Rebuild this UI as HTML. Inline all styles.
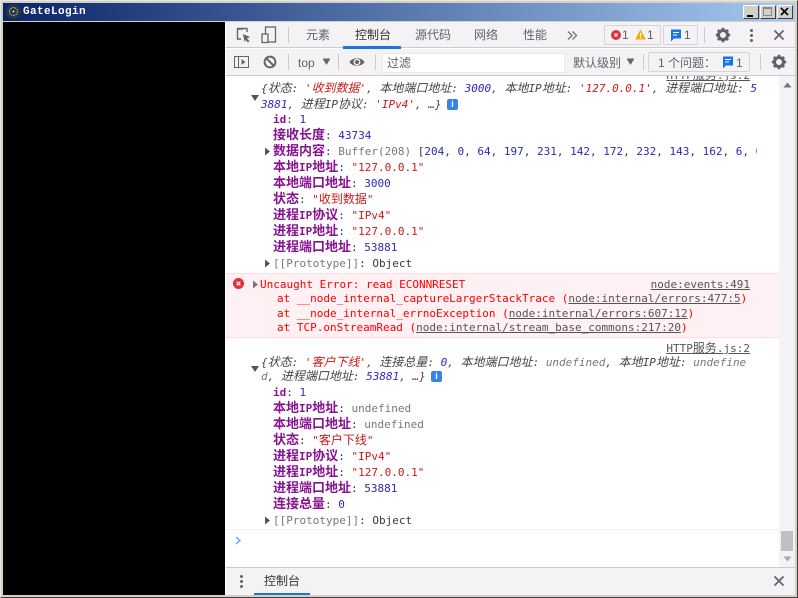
<!DOCTYPE html>
<html><head><meta charset="utf-8">
<style>
html,body{margin:0;padding:0;width:798px;height:598px;overflow:hidden;background:#d4d0c8}
*{box-sizing:border-box}
div,span.a,svg.a{position:absolute}
.ui{font-family:"Liberation Sans","Noto Sans CJK SC",sans-serif;font-size:12px;color:#5f6368;line-height:16px;white-space:nowrap}
.l{position:absolute;font-family:"DejaVu Sans Mono","Liberation Mono","Noto Sans CJK SC",monospace;font-size:11px;line-height:16px;height:16px;white-space:pre;color:#303942}
.l u{font-size:12px;text-decoration:none;line-height:0;font-family:"Noto Sans CJK SC",sans-serif}
.k{color:#881391;font-weight:bold}
.k u{font-weight:bold;font-size:13px}
.n{color:#2a2ab8}.s{color:#d01818}.g{color:#777}
.it{font-style:italic;color:#444}
.lk{text-decoration:underline;color:#555}
.lk u{text-decoration:underline}
.e{color:#f00}
</style></head><body>
<div style="left:0;top:0;width:798px;height:598px;border:1px solid #888;border-top-color:#e8e6e0;border-left-color:#e8e6e0;border-bottom-color:#404040;border-right-color:#404040"></div>
<!-- title bar -->
<div style="left:3px;top:3px;width:792px;height:18px;background:linear-gradient(90deg,#0a246a,#a6caf0)"></div>
<div style="left:6px;top:4px;width:15px;height:15px;border-radius:50%;background:#2b3440"></div>
<svg class="a" style="left:8px;top:6px" width="11" height="11"><circle cx="5.5" cy="5.5" r="4" fill="none" stroke="#b8c4d0" stroke-width="1" stroke-dasharray="1.5 1"/><circle cx="5.5" cy="5.5" r="1" fill="#dde"/></svg>
<div style="left:23px;top:4px;font:bold 11px/16px 'Liberation Mono',monospace;color:#fff;letter-spacing:.4px">GateLogin</div>
<div style="left:743px;top:5px;width:16px;height:14px;background:#d4d0c8;border:1px solid;border-color:#fff #404040 #404040 #fff"></div>
<div style="left:747px;top:15px;width:6px;height:2px;background:#000"></div>
<div style="left:760px;top:5px;width:16px;height:14px;background:#d4d0c8;border:1px solid;border-color:#fff #404040 #404040 #fff"></div>
<div style="left:763px;top:7px;width:9px;height:9px;border:1px solid #888;border-top-width:2px"></div>
<div style="left:777px;top:5px;width:16px;height:14px;background:#d4d0c8;border:1px solid;border-color:#fff #404040 #404040 #fff"></div>
<svg class="a" style="left:780px;top:7px" width="10" height="10"><path d="M1 1L8 8M8 1L1 8" stroke="#000" stroke-width="1.7"/></svg>
<!-- black -->
<div style="left:3px;top:22px;width:222px;height:573px;background:#000"></div>
<!-- devtools -->
<div style="left:225px;top:22px;width:570px;height:573px;background:#fff"></div>
<div style="left:226px;top:22px;width:569px;height:26px;background:#f5f2f6;border-bottom:1px solid #cbc8d2"></div>
<div style="left:226px;top:49px;width:569px;height:27px;background:#f5f2f6;border-bottom:1px solid #cbc8d2"></div>
<!-- toolbar1 icons -->
<svg class="a" style="left:235px;top:27px" width="17" height="17"><path d="M8 2H2.5V12H6" fill="none" stroke="#666" stroke-width="1.4"/><path d="M2 1.5H12V5" fill="none" stroke="#666" stroke-width="1.4"/><path d="M8 7L15 10L12 11.5L14.5 14L13 15.5L10.5 13L9.5 15Z" fill="#666"/></svg>
<svg class="a" style="left:261px;top:26px" width="17" height="18"><rect x="4.5" y="1" width="10" height="15" fill="none" stroke="#666" stroke-width="1.3"/><rect x="1" y="8" width="6" height="8.5" fill="#f5f2f6" stroke="#666" stroke-width="1.3"/></svg>
<div style="left:288px;top:27px;width:1px;height:16px;background:#ccc"></div>
<div class="ui" style="left:306px;top:27px;font-size:12px">元素</div>
<div class="ui" style="left:355px;top:27px;font-size:12px;color:#333">控制台</div>
<div style="left:343px;top:46px;width:58px;height:3px;background:#1a73e8"></div>
<div class="ui" style="left:415px;top:27px">源代码</div>
<div class="ui" style="left:474px;top:27px">网络</div>
<div class="ui" style="left:523px;top:27px">性能</div>
<svg class="a" style="left:567px;top:30px" width="11" height="11"><path d="M1 1.5L5 5.5L1 9.5M5.5 1.5L9.5 5.5L5.5 9.5" fill="none" stroke="#777" stroke-width="1.4"/></svg>
<div style="left:604px;top:25px;width:57px;height:20px;border:1px solid #d6d3da;border-radius:2px"></div>
<div style="left:611px;top:30px;width:10px;height:10px;border-radius:50%;background:#e0323c"></div>
<svg class="a" style="left:611px;top:30px" width="10" height="10"><path d="M3.5 3.5L6.5 6.5M6.5 3.5L3.5 6.5" stroke="#fff" stroke-width="1.2"/></svg>
<div class="ui" style="left:622px;top:27px">1</div>
<svg class="a" style="left:635px;top:29px" width="11" height="11"><path d="M5.5 0.5L10.8 10.5H0.2Z" fill="#f2ab00"/><rect x="5" y="4" width="1.2" height="3.5" fill="#fff"/><rect x="5" y="8.2" width="1.2" height="1.2" fill="#fff"/></svg>
<div class="ui" style="left:647px;top:27px">1</div>
<div style="left:663px;top:25px;width:35px;height:20px;border:1px solid #d6d3da;border-radius:2px"></div>
<svg class="a" style="left:670px;top:29px" width="12" height="13"><path d="M1 0.5H11V9.5H4L1 12.5Z" fill="#1a73e8"/><path d="M3 3.5H9M3 6H7" stroke="#fff" stroke-width="1.1"/></svg>
<div class="ui" style="left:684px;top:27px">1</div>
<div style="left:704px;top:27px;width:1px;height:16px;background:#ccc"></div>
<svg class="a" style="left:715px;top:27px" width="16" height="16" viewBox="0 0 16 16"><circle cx="8" cy="8" r="4.5" fill="none" stroke="#5f6368" stroke-width="3"/><path d="M8 0.8V3.5M8 12.5V15.2M0.8 8H3.5M12.5 8H15.2M2.9 2.9L4.8 4.8M11.2 11.2L13.1 13.1M13.1 2.9L11.2 4.8M4.8 11.2L2.9 13.1" stroke="#5f6368" stroke-width="2.6"/></svg>
<div style="left:750px;top:29px;width:3px;height:3px;border-radius:50%;background:#5f6368"></div>
<div style="left:750px;top:34px;width:3px;height:3px;border-radius:50%;background:#5f6368"></div>
<div style="left:750px;top:39px;width:3px;height:3px;border-radius:50%;background:#5f6368"></div>
<svg class="a" style="left:773px;top:29px" width="12" height="12"><path d="M1.5 1.5L10.5 10.5M10.5 1.5L1.5 10.5" stroke="#5f6368" stroke-width="1.7"/></svg>
<!-- toolbar2 -->
<svg class="a" style="left:234px;top:55px" width="16" height="14"><rect x="0.5" y="1.5" width="14" height="11" fill="none" stroke="#666"/><path d="M4.5 1.5V12.5" stroke="#666"/><path d="M7.5 4L11.5 7L7.5 10Z" fill="#666"/></svg>
<svg class="a" style="left:263px;top:55px" width="14" height="14"><circle cx="7" cy="7" r="5.4" fill="none" stroke="#666" stroke-width="2"/><path d="M3 3L11 11" stroke="#666" stroke-width="2"/></svg>
<div style="left:288px;top:54px;width:1px;height:16px;background:#ccc"></div>
<div class="ui" style="left:298px;top:55px;font-size:12px">top</div>
<svg class="a" style="left:322px;top:58px" width="9" height="8"><path d="M0.5 0.5H8.5L4.5 7Z" fill="#666"/></svg>
<div style="left:338px;top:54px;width:1px;height:16px;background:#ccc"></div>
<svg class="a" style="left:349px;top:56px" width="16" height="12"><path d="M0.5 6C3 1 13 1 15.5 6C13 11 3 11 0.5 6Z" fill="#666"/><circle cx="8" cy="6" r="3.4" fill="#f5f2f6"/><circle cx="8" cy="6" r="2" fill="#666"/></svg>
<div style="left:375px;top:54px;width:1px;height:16px;background:#ccc"></div>
<div style="left:382px;top:53px;width:183px;height:20px;background:#fff;border:1px solid #ece9ee"></div>
<div class="ui" style="left:387px;top:55px">过滤</div>
<div class="ui" style="left:573px;top:55px">默认级别</div>
<svg class="a" style="left:626px;top:58px" width="9" height="8"><path d="M0.5 0.5H8.5L4.5 7Z" fill="#666"/></svg>
<div style="left:643px;top:54px;width:1px;height:16px;background:#ccc"></div>
<div style="left:648px;top:52px;width:102px;height:20px;border:1px solid #d6d3da;border-radius:2px"></div>
<div class="ui" style="left:658px;top:55px">1 个问题：</div>
<svg class="a" style="left:722px;top:56px" width="12" height="13"><path d="M1 0.5H11V9.5H4L1 12.5Z" fill="#1a73e8"/><path d="M3 3.5H9M3 6H7" stroke="#fff" stroke-width="1.1"/></svg>
<div class="ui" style="left:736px;top:55px">1</div>
<div style="left:760px;top:54px;width:1px;height:16px;background:#ccc"></div>
<svg class="a" style="left:771px;top:54px" width="16" height="16" viewBox="0 0 16 16"><circle cx="8" cy="8" r="4.5" fill="none" stroke="#5f6368" stroke-width="3"/><path d="M8 0.8V3.5M8 12.5V15.2M0.8 8H3.5M12.5 8H15.2M2.9 2.9L4.8 4.8M11.2 11.2L13.1 13.1M13.1 2.9L11.2 4.8M4.8 11.2L2.9 13.1" stroke="#5f6368" stroke-width="2.6"/></svg>

<!-- console area -->
<div style="left:226px;top:76px;width:553px;height:491px;overflow:hidden">
<div style="left:0;top:2px;width:553px;height:489px">
<div style="left:0;top:195px;width:553px;height:65px;background:#fff0f3;border-top:1px solid #fdd;border-bottom:1px solid #fdd"></div>
<div style="left:0;top:451px;width:553px;height:1px;background:#f0f0f0"></div>
<div class="l lk" style="right:29px;top:-10px">HTTP<u>服务</u>.js:2</div>
<div class="l it" style="left:35px;top:3px;width:497px;overflow:hidden">{<u>状态</u>: <span class="s">'<u>收到数据</u>'</span>, <u>本地端口地址</u>: <span class="n">3000</span>, <u>本地</u>IP<u>地址</u>: <span class="s">'127.0.0.1'</span>, <u>进程端口地址</u>: <span class="n">5</span></div>
<div class="l it" style="left:35px;top:19px"><span class="n">3881</span>, <u>进程</u>IP<u>协议</u>: <span class="s">'IPv4'</span>, …}</div>
<div style="left:221px;top:21px;width:11px;height:11px;background:#3b82e6;border-radius:2px;color:#fff;font:bold 9px/11px 'Liberation Sans',sans-serif;text-align:center">i</div>
<svg class="a" style="left:25px;top:16px" width="8" height="8"><path d="M0 1H8L4 7Z" fill="#555"/></svg>
<div class="l" style="left:47px;top:34px"><span class="k">id</span>: <span class="n">1</span></div>
<div class="l" style="left:47px;top:50px"><span class="k"><u>接收长度</u></span>: <span class="n">43734</span></div>
<svg class="a" style="left:38px;top:69px" width="7" height="9"><path d="M1 0.5V8.5L6 4.5Z" fill="#555"/></svg>
<div class="l" style="left:47px;top:66px;width:484px;overflow:hidden"><span class="k"><u>数据内容</u></span>: <span class="g">Buffer(208)</span> [<span class="n">204</span>, <span class="n">0</span>, <span class="n">64</span>, <span class="n">197</span>, <span class="n">231</span>, <span class="n">142</span>, <span class="n">172</span>, <span class="n">232</span>, <span class="n">143</span>, <span class="n">162</span>, <span class="n">6</span>, <span class="n">0</span></div>
<div class="l" style="left:47px;top:82px"><span class="k"><u>本地</u>IP<u>地址</u></span>: <span class="s">"127.0.0.1"</span></div>
<div class="l" style="left:47px;top:98px"><span class="k"><u>本地端口地址</u></span>: <span class="n">3000</span></div>
<div class="l" style="left:47px;top:114px"><span class="k"><u>状态</u></span>: <span class="s">"<u>收到数据</u>"</span></div>
<div class="l" style="left:47px;top:130px"><span class="k"><u>进程</u>IP<u>协议</u></span>: <span class="s">"IPv4"</span></div>
<div class="l" style="left:47px;top:146px"><span class="k"><u>进程</u>IP<u>地址</u></span>: <span class="s">"127.0.0.1"</span></div>
<div class="l" style="left:47px;top:162px"><span class="k"><u>进程端口地址</u></span>: <span class="n">53881</span></div>
<svg class="a" style="left:38px;top:181px" width="7" height="9"><path d="M1 0.5V8.5L6 4.5Z" fill="#555"/></svg>
<div class="l" style="left:47px;top:178px"><span class="g">[[Prototype]]</span>: Object</div>
<!-- error -->
<div style="left:7px;top:200px;width:11px;height:11px;border-radius:50%;background:#e0323c"></div>
<svg class="a" style="left:7px;top:200px" width="11" height="11"><path d="M3.7 3.7L7.3 7.3M7.3 3.7L3.7 7.3" stroke="#fff" stroke-width="1.3"/></svg>
<svg class="a" style="left:26px;top:202px" width="7" height="9"><path d="M1 0.5V8.5L6 4.5Z" fill="#777"/></svg>
<div class="l e" style="left:34px;top:199px">Uncaught Error: read ECONNRESET</div>
<div class="l lk" style="right:29px;top:199px">node:events:491</div>
<div class="l e" style="left:51px;top:213px">at __node_internal_captureLargerStackTrace (<span class="lk">node:internal/errors:477:5</span>)</div>
<div class="l e" style="left:51px;top:228px">at __node_internal_errnoException (<span class="lk">node:internal/errors:607:12</span>)</div>
<div class="l e" style="left:51px;top:242px">at TCP.onStreamRead (<span class="lk">node:internal/stream_base_commons:217:20</span>)</div>
<!-- second -->
<div class="l lk" style="right:29px;top:263px">HTTP<u>服务</u>.js:2</div>
<div class="l it" style="left:35px;top:277px;width:497px;overflow:hidden">{<u>状态</u>: <span class="s">'<u>客户下线</u>'</span>, <u>连接总量</u>: <span class="n">0</span>, <u>本地端口地址</u>: <span class="g">undefined</span>, <u>本地</u>IP<u>地址</u>: <span class="g">undefine</span></div>
<div class="l it" style="left:35px;top:291px"><span class="g">d</span>, <u>进程端口地址</u>: <span class="n">53881</span>, …}</div>
<div style="left:205px;top:293px;width:11px;height:11px;background:#3b82e6;border-radius:2px;color:#fff;font:bold 9px/11px 'Liberation Sans',sans-serif;text-align:center">i</div>
<svg class="a" style="left:25px;top:287px" width="8" height="8"><path d="M0 1H8L4 7Z" fill="#555"/></svg>
<div class="l" style="left:47px;top:307px"><span class="k">id</span>: <span class="n">1</span></div>
<div class="l" style="left:47px;top:323px"><span class="k"><u>本地</u>IP<u>地址</u></span>: <span class="g">undefined</span></div>
<div class="l" style="left:47px;top:339px"><span class="k"><u>本地端口地址</u></span>: <span class="g">undefined</span></div>
<div class="l" style="left:47px;top:355px"><span class="k"><u>状态</u></span>: <span class="s">"<u>客户下线</u>"</span></div>
<div class="l" style="left:47px;top:371px"><span class="k"><u>进程</u>IP<u>协议</u></span>: <span class="s">"IPv4"</span></div>
<div class="l" style="left:47px;top:387px"><span class="k"><u>进程</u>IP<u>地址</u></span>: <span class="s">"127.0.0.1"</span></div>
<div class="l" style="left:47px;top:403px"><span class="k"><u>进程端口地址</u></span>: <span class="n">53881</span></div>
<div class="l" style="left:47px;top:419px"><span class="k"><u>连接总量</u></span>: <span class="n">0</span></div>
<svg class="a" style="left:38px;top:438px" width="7" height="9"><path d="M1 0.5V8.5L6 4.5Z" fill="#555"/></svg>
<div class="l" style="left:47px;top:435px"><span class="g">[[Prototype]]</span>: Object</div>
<svg class="a" style="left:9px;top:458px" width="7" height="9"><path d="M1 1L5 4.5L1 8" fill="none" stroke="#6aa3f0" stroke-width="1.4"/></svg>
</div>
</div>
<!-- scrollbar -->
<div style="left:779px;top:76px;width:16px;height:491px;background:#f5f2f6"></div>
<svg class="a" style="left:783px;top:82px" width="9" height="6"><path d="M0.5 5.5H8.5L4.5 0.5Z" fill="#777"/></svg>
<div style="left:781px;top:531px;width:12px;height:20px;background:#c1bfc4"></div>
<svg class="a" style="left:783px;top:556px" width="9" height="6"><path d="M0.5 0.5H8.5L4.5 5.5Z" fill="#a8a6ab"/></svg>
<!-- bottom -->
<div style="left:226px;top:567px;width:569px;height:28px;background:#f5f2f6;border-top:1px solid #cbc8d2"></div>
<div style="left:240px;top:575px;width:3px;height:3px;border-radius:50%;background:#5f6368"></div>
<div style="left:240px;top:580px;width:3px;height:3px;border-radius:50%;background:#5f6368"></div>
<div style="left:240px;top:585px;width:3px;height:3px;border-radius:50%;background:#5f6368"></div>
<div class="ui" style="left:264px;top:573px;color:#333">控制台</div>
<div style="left:254px;top:593px;width:56px;height:2px;background:#1a73e8"></div>
<svg class="a" style="left:773px;top:575px" width="12" height="12"><path d="M1.5 1.5L10.5 10.5M10.5 1.5L1.5 10.5" stroke="#5f6368" stroke-width="1.7"/></svg>
</body></html>
